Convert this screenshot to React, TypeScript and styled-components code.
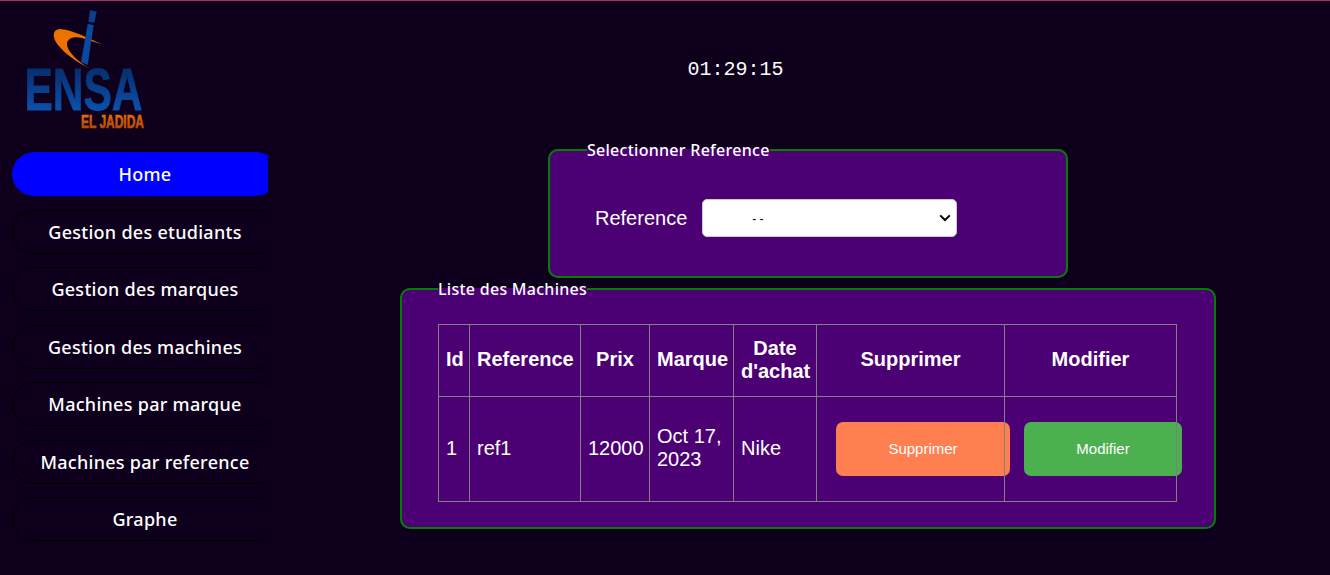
import { ReactElement } from "react";
import styled, { createGlobalStyle } from "styled-components";

const NAV_ITEMS = [
  "Home",
  "Gestion des etudiants",
  "Gestion des marques",
  "Gestion des machines",
  "Machines par marque",
  "Machines par reference",
  "Graphe",
];

const COLUMN_WIDTHS = [31, 111, 69, 84, 83, 188, 172];

const Logo = (): ReactElement => (
  <LogoSvg viewBox="20 6 175 134" aria-label="ENSA El Jadida">
    <defs>
      <linearGradient id="ensaBlue" x1="0" y1="0" x2="0" y2="1">
        <stop offset="0.12" stopColor="#062a66" />
        <stop offset="0.8" stopColor="#0a50aa" />
      </linearGradient>
      <linearGradient id="ensaOrange" x1="0" y1="0" x2="0" y2="1">
        <stop offset="0.15" stopColor="#ee7000" />
        <stop offset="0.8" stopColor="#b84a08" />
      </linearGradient>
    </defs>
    <path
      d="M102.5 44.5C88 38 70 29 60 29C52 29 52 38 58 45C65 54 78 63 90 68.5C78 62 68 52 67 45C66.5 38 74 36 82 38Z"
      fill="#ee7100"
    />
    <polygon points="90,10 96.7,11.7 94.3,22.7 88.3,21.7" fill="#0a3f8c" />
    <polygon points="87.7,24 93.7,25 87.7,65 81,62" fill="#0a4a9e" />
    <text
      x="24.5"
      y="109.5"
      fontFamily="'Liberation Sans', Arial, sans-serif"
      fontWeight="700"
      fontSize="60"
      textLength="118"
      lengthAdjust="spacingAndGlyphs"
      fill="url(#ensaBlue)"
      stroke="url(#ensaBlue)"
      strokeWidth="0.8"
    >
      ENSA
    </text>
    <text
      x="81"
      y="127.5"
      fontFamily="'Liberation Sans', Arial, sans-serif"
      fontWeight="700"
      fontSize="19"
      textLength="63"
      lengthAdjust="spacingAndGlyphs"
      fill="url(#ensaOrange)"
      stroke="url(#ensaOrange)"
      strokeWidth="0.7"
    >
      EL JADIDA
    </text>
  </LogoSvg>
);

export default function App(): ReactElement {
  return (
    <>
      <GlobalStyle />
      <Page>
        <Sidebar>
          <Logo />
          <Nav>
            {NAV_ITEMS.map((item, index) => (
              <NavItem key={item} $active={index === 0}>
                {item}
              </NavItem>
            ))}
          </Nav>
        </Sidebar>
        <Main>
          <Clock>01:29:15</Clock>
          <SelectBox>
            <Legend $offset={37}>Selectionner Reference</Legend>
            <FormRow>
              <FieldLabel htmlFor="reference">Reference</FieldLabel>
              <SelectWrap>
                <ReferenceSelect id="reference" defaultValue="">
                  <option value=""></option>
                </ReferenceSelect>
                <SelectMark>- -</SelectMark>
                <SelectChevron viewBox="0 0 12 8" aria-hidden="true">
                  <polyline points="1.2,1.4 6,6 10.8,1.4" />
                </SelectChevron>
              </SelectWrap>
            </FormRow>
          </SelectBox>
          <TableBox>
            <Legend $offset={36}>Liste des Machines</Legend>
            <MachineTable>
              <colgroup>
                {COLUMN_WIDTHS.map((width, index) => (
                  <col key={index} width={width} />
                ))}
              </colgroup>
              <thead>
                <tr>
                  <th>Id</th>
                  <th>Reference</th>
                  <th>Prix</th>
                  <th>Marque</th>
                  <th>Date d'achat</th>
                  <th>Supprimer</th>
                  <th>Modifier</th>
                </tr>
              </thead>
              <tbody>
                <tr>
                  <td>1</td>
                  <td>ref1</td>
                  <td>12000</td>
                  <td>Oct 17, 2023</td>
                  <td>Nike</td>
                  <td>
                    <DeleteButton>Supprimer</DeleteButton>
                  </td>
                  <td>
                    <EditButton>Modifier</EditButton>
                  </td>
                </tr>
              </tbody>
            </MachineTable>
          </TableBox>
        </Main>
      </Page>
    </>
  );
}

const GlobalStyle = createGlobalStyle`
  html, body {
    margin: 0;
    padding: 0;
    background: #0e001c;
  }

  body {
    font-family: "Liberation Sans", Arial, sans-serif;
    color: #fff;
    overflow: hidden;
  }
`;

const Page = styled.div`
  display: flex;
  height: 575px;
  box-sizing: border-box;
  border-top: 1px solid #b0305f;
`;

const Sidebar = styled.aside`
  width: 268px;
  flex-shrink: 0;
  overflow: hidden;
`;

const LogoSvg = styled.svg`
  display: block;
  width: 175px;
  height: 134px;
  margin: 5px 0 12px 20px;
`;

const Nav = styled.nav`
  display: flex;
  flex-direction: column;
  gap: 13.5px;
  margin-left: 12px;
  width: 266px;
`;

const NavItem = styled.div<{ $active?: boolean }>`
  box-sizing: border-box;
  height: 44px;
  display: flex;
  align-items: center;
  justify-content: center;
  border: 1px solid ${(p) => (p.$active ? "#0000ff" : "#000")};
  border-radius: 22px;
  background: ${(p) => (p.$active ? "#0000ff" : "transparent")};
  font-family: "Noto Sans", sans-serif;
  font-size: 18px;
  font-weight: 500;
  letter-spacing: 0.28px;
  color: #fff;
`;

const Main = styled.main`
  flex: 1;
  display: flex;
  flex-direction: column;
  align-items: center;
  padding-left: 18px;
`;

const Clock = styled.div`
  margin: 57px 145px 0 0;
  height: 23px;
  line-height: 23px;
  font-family: "Liberation Mono", "Courier New", monospace;
  font-size: 20px;
`;

const Box = styled.fieldset`
  box-sizing: border-box;
  margin: 0;
  padding: 0;
  border: 2px solid #008000;
  border-radius: 10px;
  background: #4b0073;
`;

const SelectBox = styled(Box)`
  width: 520px;
  height: 137px;
  margin-top: 60px;
`;

const TableBox = styled(Box)`
  width: 816px;
  height: 249px;
  margin-top: 2px;
`;

const Legend = styled.legend<{ $offset: number }>`
  margin-left: ${(p) => p.$offset}px;
  padding: 0;
  font-family: "Noto Sans", sans-serif;
  font-size: 16px;
  font-weight: 500;
  letter-spacing: 0.27px;
  line-height: 18px;
  color: #fff;
`;

const FormRow = styled.div`
  display: flex;
  align-items: center;
  gap: 15px;
  margin: 40px 0 0 45px;
`;

const FieldLabel = styled.label`
  font-size: 20px;
`;

const SelectWrap = styled.div`
  position: relative;
  display: flex;
`;

const ReferenceSelect = styled.select`
  appearance: none;
  width: 255px;
  height: 38px;
  box-sizing: border-box;
  border: 1px solid #ccc;
  border-radius: 5px;
  background: #fff;
  color: #000;
  font-family: "Liberation Sans", Arial, sans-serif;
  font-size: 20px;
`;

const SelectMark = styled.span`
  position: absolute;
  left: 50px;
  top: 14px;
  font-size: 12px;
  line-height: 12px;
  color: #000;
  pointer-events: none;
`;

const SelectChevron = styled.svg`
  position: absolute;
  right: 6px;
  top: 15px;
  width: 12px;
  height: 8px;
  pointer-events: none;

  polyline {
    fill: none;
    stroke: #000;
    stroke-width: 2;
  }
`;

const MachineTable = styled.table`
  table-layout: fixed;
  width: 738px;
  margin: 26px 0 0 36px;
  border-collapse: collapse;
  font-size: 20px;
  line-height: 23px;

  th,
  td {
    border: 1px solid #808080;
    padding: 0 7px 2px;
  }

  th {
    height: 69px;
    font-weight: 700;
    text-align: center;
  }

  td {
    height: 102px;
    text-align: left;
  }
`;

const ActionButton = styled.button`
  display: block;
  height: 54px;
  margin-top: 2px;
  padding: 0 0 2px;
  border: none;
  border-radius: 7px;
  color: #fff;
  font-family: "Liberation Sans", Arial, sans-serif;
  font-size: 15px;
`;

const DeleteButton = styled(ActionButton)`
  width: 174px;
  margin-left: 12px;
  background: #ff7f50;
`;

const EditButton = styled(ActionButton)`
  width: 158px;
  margin-left: 12px;
  background: #4caf50;
`;
